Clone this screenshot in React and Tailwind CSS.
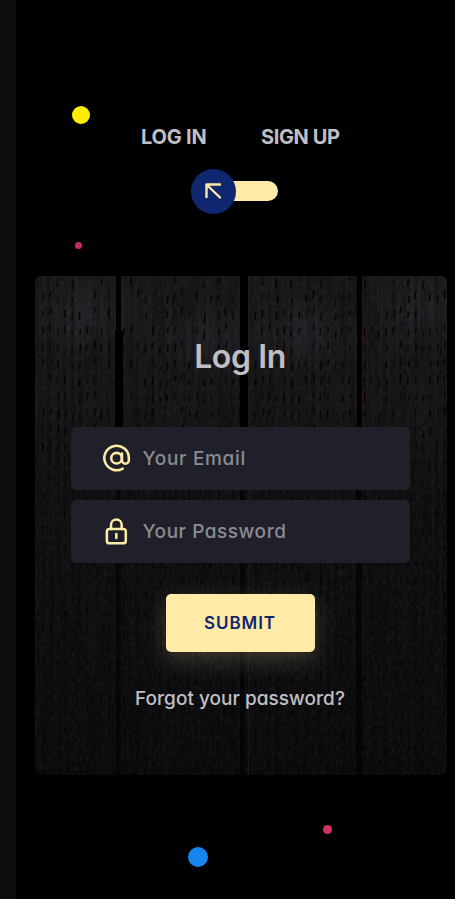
import React from 'react';

const CARD_W = 412;
const CARD_H = 499;

// Short vertical grooves, laid out in staggered columns over the boards.
function grooves() {
  const marks = [];
  let seed = 11;
  const rand = () => {
    seed = (seed * 16807) % 2147483647;
    return seed / 2147483647;
  };
  for (let c = 0; c < 56; c++) {
    const x = 8 + c * 7.3;
    const start = (c % 2 ? 13 : 0) + (Math.floor(c / 2) % 3) * 2;
    for (let y = start; y < CARD_H; y += 16.5 + (c % 2) * 0.3) {
      if (rand() < 0.3) continue;
      const fade = y < 170 ? 1 : 0.6;
      marks.push(
        <path
          key={c + '-' + y}
          d={`M${x + rand() * 1.2} ${y + rand() * 2}l-.5 ${6 + rand() * 3}`}
          stroke="#020203"
          strokeWidth="1.5"
          opacity={fade * (0.5 + rand() * 0.5)}
        />
      );
    }
  }
  return marks;
}

function Boards() {
  return (
    <svg className="absolute inset-0 h-full w-full" viewBox={`0 0 ${CARD_W} ${CARD_H}`} preserveAspectRatio="none" aria-hidden="true">
      <defs>
        <linearGradient id="base" x1="0" y1="0" x2="0" y2="1">
          <stop offset="0" stopColor="#1a191b" />
          <stop offset="0.25" stopColor="#18171a" />
          <stop offset="0.45" stopColor="#111113" />
          <stop offset="0.7" stopColor="#0f0f11" />
          <stop offset="1" stopColor="#0c0c0e" />
        </linearGradient>
        <radialGradient id="sheen">
          <stop offset="0" stopColor="#36333b" stopOpacity="0.42" />
          <stop offset="1" stopColor="#36333b" stopOpacity="0" />
        </radialGradient>
        <filter id="grain" x="0" y="0" width="100%" height="100%">
          <feTurbulence type="fractalNoise" baseFrequency="0.25 0.01" numOctaves="3" seed="4" />
          <feColorMatrix values="0 0 0 0 0  0 0 0 0 0  0 0 0 0 0  1.8 0 0 0 -0.62" />
        </filter>
        <filter id="speckle" x="0" y="0" width="100%" height="100%">
          <feTurbulence type="fractalNoise" baseFrequency="0.35 0.2" numOctaves="2" seed="9" />
          <feColorMatrix values="0 0 0 0 0.3  0 0 0 0 0.3  0 0 0 0 0.33  0 1.2 0 0 -0.5" />
        </filter>
      </defs>
      <rect width={CARD_W} height={CARD_H} fill="url(#base)" />
      <ellipse cx="52" cy="40" rx="60" ry="46" fill="url(#sheen)" />
      <ellipse cx="168" cy="62" rx="60" ry="40" fill="url(#sheen)" />
      <ellipse cx="276" cy="57" rx="60" ry="42" fill="url(#sheen)" />
      <ellipse cx="388" cy="34" rx="56" ry="46" fill="url(#sheen)" />
      <rect width={CARD_W} height={CARD_H} filter="url(#grain)" opacity="0.4" />
      <rect width={CARD_W} height={CARD_H} filter="url(#speckle)" opacity="0.14" />
      {grooves()}
      <path d="M81 0h5v54h2v98h-8V54h1z" fill="#000" />
      <path d="M81 152h5v347h-5z" fill="#000" opacity="0.5" />
      <path d="M205 0h8v152h-8z" fill="#000" />
      <path d="M205 152h5v347h-5z" fill="#000" opacity="0.55" />
      <path d="M213.5 0v499" stroke="#2b2b2e" opacity="0.4" />
      <path d="M322 0h5v152h-5z" fill="#000" />
      <path d="M321 152h6v347h-6z" fill="#000" opacity="0.6" />
      <path d="M327.5 52v20M327.5 116v15" stroke="#5a1519" opacity="0.45" />
    </svg>
  );
}

function AtIcon() {
  return (
    <svg className="size-8 shrink-0" viewBox="0 0 24 24" fill="none" stroke="#ffeba7" strokeWidth="1.9" strokeLinecap="round" strokeLinejoin="round">
      <circle cx="11.7" cy="11.4" r="4" />
      <path d="M15.7 7.8v5.1a2.6 2.6 0 0 0 5.2 0V11.2a9.2 9.2 0 1 0-4.6 8" />
    </svg>
  );
}

function LockIcon() {
  return (
    <svg className="size-8 shrink-0" viewBox="0 0 24 24" fill="none" stroke="#ffeba7" strokeWidth="1.9" strokeLinecap="round" strokeLinejoin="round">
      <rect x="4.4" y="9.7" width="14.2" height="10.8" rx="2" />
      <path d="M7.5 9.7V6.6a4 4 0 0 1 8 0v3.1M11.5 13.5v3" />
    </svg>
  );
}

function Field({ icon, label, spacing }) {
  return (
    <div className="flex h-[62.5px] items-center rounded-[5px] bg-[#1f2029] pl-[30px] pt-px">
      {icon}
      <span className={`ml-[10px] whitespace-nowrap pt-px text-[19px] font-medium text-[#8b8b92] ${spacing}`}>{label}</span>
    </div>
  );
}

export default function App() {
  return (
    <div className="relative flex h-[899px] w-[455px] overflow-hidden bg-black font-['Inter',sans-serif] [font-feature-settings:'cv11'] text-[#c0bfc5]">
      <div className="w-4 shrink-0 bg-[#0e0e0e]" />
      <main className="flex flex-1 flex-col pl-[19px] pr-2 pt-[121px]">
        <nav className="flex h-8 items-center pl-[106px] text-[20px] font-bold whitespace-nowrap">
          <span className="w-[120px] tracking-[-0.2px]">LOG IN</span>
          <span className="tracking-[-0.4px]">SIGN UP</span>
        </nav>
        <div className="mt-4 ml-[156px] flex h-11 w-[87px] items-center">
          <div className="z-10 grid size-[45px] shrink-0 place-items-center rounded-full bg-[#102770]">
            <svg className="size-6" viewBox="0 0 24 24" fill="none" stroke="#ffeba7" strokeWidth="2.4" strokeLinecap="round" strokeLinejoin="round">
              <path d="M4.5 18V5.5h13.5M5 6 18 18.5" />
            </svg>
          </div>
          <div className="-ml-4 h-5 flex-1 rounded-r-full bg-[#ffeba7]" />
        </div>
        <section className="relative mt-[63px] h-[499px] overflow-hidden rounded-[6px]">
          <Boards />
          <div className="relative flex flex-col items-center pl-[35px] pr-[37px] pt-[59px]">
            <h1 className="h-11 text-[32px] leading-[44px] font-semibold tracking-[-0.4px] whitespace-nowrap">Log In</h1>
            <form className="mt-[48px] flex w-[339px] flex-col gap-[10.5px]">
              <Field icon={<AtIcon />} label="Your Email" spacing="tracking-[0.7px]" />
              <Field icon={<LockIcon />} label="Your Password" spacing="tracking-[0.55px]" />
            </form>
            <button type="button" className="mt-[31.5px] h-[58px] w-[149px] rounded-[5px] bg-[#ffeba7] pt-px text-[17px] font-semibold tracking-[0.9px] text-[#102770] shadow-[0_8px_24px_0_rgba(255,235,167,0.2)]">
              SUBMIT
            </button>
            <a className="mt-[33px] text-[19px] leading-7 font-medium tracking-[0.03px] whitespace-nowrap">Forgot your password?</a>
          </div>
        </section>
      </main>
      <div className="absolute left-[72px] top-[106px] size-[18px] rounded-full bg-[#ffeb00]" />
      <div className="absolute left-[75px] top-[242px] size-[7px] rounded-full bg-[#c92c5b]" />
      <div className="absolute left-[323px] top-[825px] size-[9px] rounded-full bg-[#d43064]" />
      <div className="absolute left-[188px] top-[847px] size-5 rounded-full bg-[#1686ee]" />
    </div>
  );
}
